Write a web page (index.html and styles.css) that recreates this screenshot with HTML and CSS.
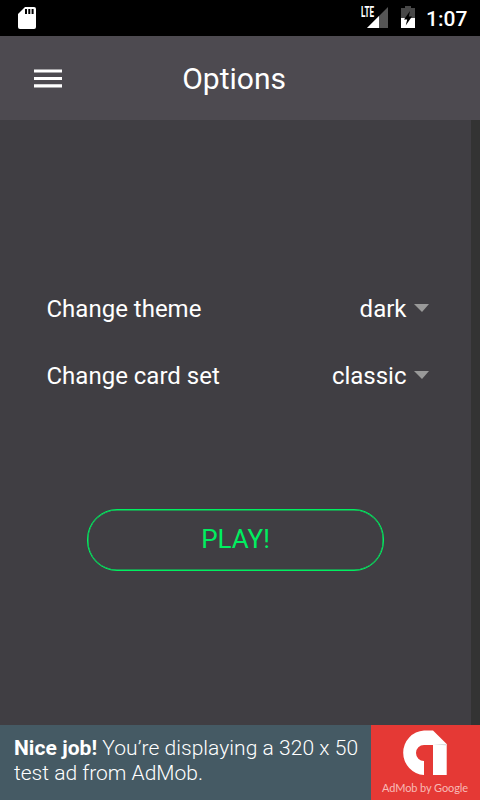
FILE: index.html
```html
<!DOCTYPE html>
<html lang="en">

<head>
    <meta charset="UTF-8">
    <title>Options</title>
    <link rel="stylesheet" href="styles.css">
</head>

<body>
    <div class="status">
        <svg class="sd" width="18" height="22" viewBox="0 0 18 22">
            <path fill="#fff" d="M7 0H16Q18 0 18 2V20Q18 22 16 22H2Q0 22 0 20V7Z"/>
            <path fill="#000" d="M7 2h2v5H7zM10.3 2h2v5h-2zM13.6 2h2v5h-2z"/>
        </svg>
        <div class="signal">
            <svg width="22" height="21" viewBox="0 0 22 21">
                <path fill="#555" d="M22 0V21H1Z"/>
                <path fill="#fff" d="M13 9V21H1Z"/>
            </svg>
            <span class="lte">LTE</span>
        </div>
        <svg class="battery" width="14" height="22" viewBox="0 0 14 22">
            <path fill="#484848" d="M4 0h6v2h4v10H0V2h4z"/>
            <path fill="#fff" d="M0 12h14v10H0z"/>
            <path fill="#000" d="M9 5L3 13.5H6.2L4.7 19.5L11 10.5H7.8Z"/>
        </svg>
        <span class="time">1:07</span>
    </div>
    <div class="header">
        <svg class="menu" width="28" height="20" viewBox="0 0 28 20">
            <path fill="#fff" d="M0 1.4h28v3.2H0zM0 9h28v3H0zM0 16.3h28v3.2H0z"/>
        </svg>
        <h1>Options</h1>
    </div>
    <div class="main">
        <div class="content">
            <div class="row">
                <span class="label">Change theme</span>
                <span class="value">dark</span>
                <i class="caret"></i>
            </div>
            <div class="row">
                <span class="label">Change card set</span>
                <span class="value">classic</span>
                <i class="caret"></i>
            </div>
            <a href="javascript:;" class="play">PLAY!</a>
        </div>
    </div>
    <div class="ad">
        <p class="ad_text"><span class="line one"><b>Nice job!</b> You’re displaying a 320 x 50</span><span class="line two">test ad from AdMob.</span></p>
        <div class="ad_logo">
            <svg width="45" height="45" viewBox="0 0 45 45">
                <path fill="#fff" d="M31 .5H22A22.3 22.3 0 0 0 22 45V31A8 8 0 0 1 22 15H31V45H44.7V14Z"/>
                <path fill="#ddd" d="M31 14h13.7v1.5z"/>
            </svg>
            <span class="ad_by">AdMob by <b>Google</b></span>
        </div>
    </div>
</body>

</html>
```
FILE: styles.css
```css
* {
    padding: 0;
    margin: 0;
    box-sizing: border-box;
}

body {
    width: 480px;
    height: 800px;
    overflow: hidden;
    display: flex;
    flex-direction: column;
    background-color: #333;
    color: #fff;
    font-family: Roboto, sans-serif;
}

svg {
    display: block;
    flex: none;
}

/* status bar */
.status {
    height: 36px;
    padding: 0 12px 0 18px;
    display: flex;
    align-items: flex-start;
    background-color: #000;
}

.sd {
    margin-top: 7px;
}

.signal {
    position: relative;
    margin: 7px 13px 0 auto;
}

.lte {
    position: absolute;
    left: -5px;
    top: 0;
    font-size: 14px;
    line-height: 11px;
    font-weight: 700;
    transform: scaleX(.58);
    transform-origin: 0 0;
}

.battery {
    margin-top: 6px;
}

.time {
    width: 42px;
    margin-left: 11px;
    font-size: 21px;
    line-height: 38px;
    font-weight: 500;
    white-space: nowrap;
}

/* header */
.header {
    height: 84px;
    padding-left: 34px;
    display: flex;
    align-items: center;
    background-color: #4d4a50;
}

.header h1 {
    margin: 2px 0 0 120.2px;
    font-size: 30px;
    line-height: 36px;
    font-weight: 400;
}

/* options */
.main {
    height: 605px;
    background-color: #333;
}

.content {
    width: 471px;
    height: 100%;
    padding: 155px 42px 0 46.5px;
    display: flex;
    flex-direction: column;
    background-color: #403e43;
}

.row {
    height: 67px;
    display: flex;
    align-items: center;
    font-size: 24px;
}

.label {
    flex: 1;
}

.caret {
    margin: 0 0 1px 7.5px;
    border: 7.5px solid transparent;
    border-top: 8px solid #999;
    border-bottom: 0;
    border-left-width: 8px;
}

.play {
    width: 297px;
    height: 62px;
    margin: 100px 0 0 40.5px;
    border: 1px solid #00ee60;
    border-radius: 30px;
    box-shadow: inset 0 0 0 .5px #00ee60;
    color: #00ee60;
    font-size: 26px;
    line-height: 58px;
    text-align: center;
    text-decoration: none;
}

/* banner */
.ad {
    height: 75px;
    display: flex;
    background-color: #455a64;
}

.ad_text {
    width: 371px;
    padding: 11px 0 0 14px;
    font-size: 21px;
    line-height: 25px;
    font-weight: 300;
    white-space: nowrap;
}

.line {
    display: block;
}

.one {
    letter-spacing: .05px;
}

.ad_text b {
    font-weight: 700;
}

.ad_logo {
    flex: 1;
    padding: 5px 1px 0 0;
    display: flex;
    flex-direction: column;
    align-items: center;
    background-color: #e53935;
}

.ad_logo svg {
    margin-right: 1px;
}

.ad_by {
    margin-top: 6px;
    color: #f8b9b6;
    font-family: Lato, sans-serif;
    font-size: 11px;
    line-height: 14px;
    letter-spacing: -.1px;
    white-space: nowrap;
}

.ad_by b {
    font-weight: 400;
}
```
